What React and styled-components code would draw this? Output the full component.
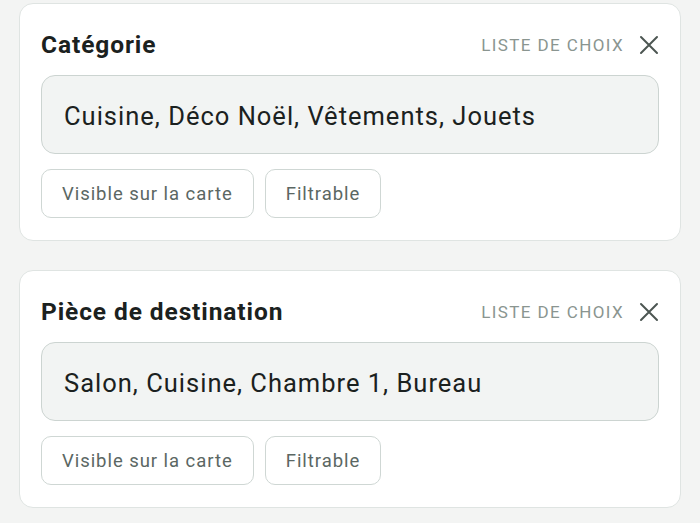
import styled, { createGlobalStyle } from 'styled-components';

const GlobalStyle = createGlobalStyle`
  *, *::before, *::after { box-sizing: border-box; }
  html, body {
    margin: 0;
    padding: 0;
    background: #f3f4f3;
    font-family: Roboto, "Liberation Sans", sans-serif;
  }
`;

const fields = [
  { title: 'Catégorie', values: 'Cuisine, Déco Noël, Vêtements, Jouets' },
  { title: 'Pièce de destination', values: 'Salon, Cuisine, Chambre 1, Bureau' },
];

function CloseIcon() {
  return (
    <svg width="20" height="20" viewBox="0 0 20 20" fill="none">
      <path d="M2 2 L18 18 M18 2 L2 18" stroke="#4c5652" strokeWidth="2" strokeLinecap="round" />
    </svg>
  );
}

export default function App() {
  return (
    <>
      <GlobalStyle />
      <Page>
        {fields.map(f => (
          <Card key={f.title}>
            <Header>
              <Title>{f.title}</Title>
              <Kind>Liste de choix</Kind>
              <CloseButton><CloseIcon /></CloseButton>
            </Header>
            <ValueBox>{f.values}</ValueBox>
            <Options>
              <OptionButton>Visible sur la carte</OptionButton>
              <OptionButton>Filtrable</OptionButton>
            </Options>
          </Card>
        ))}
      </Page>
    </>
  );
}

const Page = styled.div`
  display: flex;
  flex-direction: column;
  gap: 29px;
  padding: 3px 19px 16px 19px;
`;

const Card = styled.div`
  background: #fff;
  border: 1px solid #dfe4e2;
  border-radius: 14px;
  padding: 23px 21px 22px 21px;
  display: flex;
  flex-direction: column;
`;

const Header = styled.div`
  display: flex;
  align-items: center;
  height: 32px;
`;

const Title = styled.h3`
  flex: 1;
  margin: 0;
  padding-top: 2px;
  font-size: 24.5px;
  font-weight: 700;
  letter-spacing: 0.9px;
  color: #1b2120;
`;

const Kind = styled.span`
  padding-top: 3px;
  font-size: 17px;
  letter-spacing: 1.4px;
  text-transform: uppercase;
  color: #8a9590;
  margin-right: 15px;
`;

const CloseButton = styled.div`
  display: flex;
  align-items: center;
  width: 20px;
  height: 20px;
  margin-top: 4px;
`;

const ValueBox = styled.div`
  margin-top: 16px;
  height: 79px;
  display: flex;
  align-items: center;
  padding: 2px 22px 0 22px;
  background: #f2f4f3;
  border: 1px solid #ccd4d1;
  border-radius: 14px;
  font-size: 25.5px;
  letter-spacing: 1px;
  color: #1b2120;
`;

const Options = styled.div`
  display: flex;
  gap: 11px;
  margin-top: 15px;
`;

const OptionButton = styled.div`
  height: 49px;
  display: flex;
  align-items: center;
  padding: 0 20px;
  border: 1px solid #cfd7d4;
  border-radius: 10px;
  font-size: 18.5px;
  letter-spacing: 0.95px;
  color: #5b6763;
`;
